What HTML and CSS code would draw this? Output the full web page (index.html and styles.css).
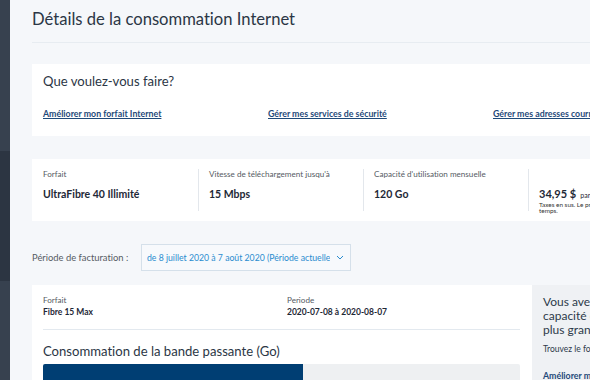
FILE: index.html
```
<!DOCTYPE html>
<html lang="fr">
<head>
<meta charset="utf-8">
<link rel="stylesheet" href="styles.css">
</head>
<body>
<div class="app">
  <aside class="sidebar">
    <div class="side-top"></div>
    <div class="side-mid"></div>
    <div class="side-bot"></div>
  </aside>
  <main class="main">
    <h1 class="title">Détails de la consommation Internet</h1>
    <div class="sep"></div>

    <section class="card actions">
      <h2 class="card-title">Que voulez-vous faire?</h2>
      <div class="links">
        <a class="link" href="#">Améliorer mon forfait Internet</a>
        <a class="link" href="#">Gérer mes services de sécurité</a>
        <a class="link" href="#">Gérer mes adresses courriel</a>
      </div>
    </section>

    <section class="card plan">
      <div class="col">
        <div class="label">Forfait</div>
        <div class="value">UltraFibre 40 Illimité</div>
      </div>
      <div class="col">
        <div class="label">Vitesse de téléchargement jusqu'à</div>
        <div class="value">15 Mbps</div>
      </div>
      <div class="col">
        <div class="label">Capacité d'utilisation mensuelle</div>
        <div class="value">120 Go</div>
      </div>
      <div class="col price">
        <div class="price-line"><span class="amount">34,95 $</span> <span class="per">par mois</span></div>
        <div class="note">Taxes en sus. Le prix peut changer en tout temps.</div>
      </div>
    </section>

    <div class="period">
      <span class="period-label">Période de facturation :</span>
      <div class="select">
        <span class="select-text">de 8 juillet 2020 à 7 août 2020 (Période actuelle)</span>
        <svg class="chev" width="8" height="5" viewBox="0 0 8 5"><path d="M1 1 L4 4 L7 1" fill="none" stroke="#2a8ccf" stroke-width="1"/></svg>
      </div>
    </div>

    <div class="usage">
      <section class="card usage-main">
        <div class="info-row">
          <div class="info">
            <div class="label">Forfait</div>
            <div class="info-value">Fibre 15 Max</div>
          </div>
          <div class="info">
            <div class="label">Periode</div>
            <div class="info-value">2020-07-08 à 2020-08-07</div>
          </div>
        </div>
        <div class="inner-sep"></div>
        <h2 class="card-title bw">Consommation de la bande passante (Go)</h2>
        <div class="bar"><div class="bar-fill" style="width:54.5%"></div></div>
      </section>
      <aside class="promo">
        <p class="promo-title"><span class="pl">Vous avez besoin d'une</span><span class="pl">capacité d'utilisation</span><span class="pl">plus grande?</span></p>
        <p class="promo-text">Trouvez le forfait qui vous convient.</p>
        <a class="link" href="#">Améliorer mon forfait</a>
      </aside>
    </div>
  </main>
</div>
</body>
</html>
```
FILE: styles.css
```
html, body {
  margin: 0;
  padding: 0;
}
body {
  width: 590px;
  height: 380px;
  overflow: hidden;
  background: #f5f7fa;
  font-family: Lato, "Open Sans", sans-serif;
  font-variant-ligatures: none;
  color: #2d3a4a;
}
.app {
  display: flex;
  width: 700px;
  height: 380px;
}
.sidebar {
  width: 10px;
  flex: none;
  display: flex;
  flex-direction: column;
}
.side-top { height: 151px; background: #37414f; }
.side-mid { height: 130px; background: #2c3542; }
.side-bot { flex: 1; background: #37414f; }
.main {
  flex: 1;
  padding-left: 22px;
}
.title {
  margin: 0;
  padding-top: 7px;
  height: 27px;
  font-size: 16.6px;
  font-weight: 400;
  line-height: 24px;
  color: #2b3645;
}
.sep {
  height: 1px;
  background: #e7ecf1;
  margin-top: 8px;
}
.card {
  background: #fff;
}
.actions {
  margin-top: 21px;
  height: 72px;
  padding: 0 11px;
  box-sizing: border-box;
}
.card-title {
  margin: 0;
  font-weight: 400;
  font-size: 13.1px;
  line-height: 18px;
  color: #2b3645;
}
.actions .card-title {
  padding-top: 8px;
}
.links {
  display: grid;
  grid-template-columns: 225px 225px 225px;
  margin-top: 18px;
}
.link {
  font-size: 8.8px;
  line-height: 12px;
  color: #1f4a7a;
  text-decoration: underline;
  font-weight: 700;
  white-space: nowrap;
}
.plan {
  margin-top: 23px;
  height: 62px;
  display: flex;
  align-items: stretch;
  padding: 10px 0;
  box-sizing: border-box;
}
.col {
  width: 165px;
  flex: none;
  box-sizing: border-box;
  padding-left: 10px;
  border-left: 1px solid #e3e7ec;
}
.col:first-child {
  border-left: none;
  padding-left: 11px;
  width: 166px;
}
.label {
  font-size: 8.1px;
  line-height: 10px;
  color: #555b63;
  white-space: nowrap;
}
.value {
  margin-top: 8px;
  font-size: 10.5px;
  font-weight: 700;
  line-height: 14px;
  color: #1e2836;
  white-space: nowrap;
}
.price-line {
  margin-top: 16px;
  line-height: 14px;
  white-space: nowrap;
}
.amount {
  font-size: 11px;
  font-weight: 700;
  color: #1e2836;
}
.per {
  font-size: 7px;
  color: #1e2836;
}
.note {
  font-size: 6.4px;
  line-height: 6px;
  color: #333;
  margin-top: 0;
  width: 130px;
}
.period {
  display: flex;
  align-items: center;
  margin-top: 23px;
  height: 27px;
}
.period-label {
  font-size: 9.4px;
  color: #555b63;
  width: 109px;
  flex: none;
}
.select {
  width: 210px;
  height: 27px;
  box-sizing: border-box;
  border: 1px solid #d5e0ea;
  background: #f7f9fc;
  display: flex;
  align-items: center;
  padding: 0 6px 0 5px;
  gap: 6px;
}
.select-text {
  flex: 1;
  overflow: hidden;
  white-space: nowrap;
  font-size: 8.7px;
  color: #2a8ccf;
}
.chev { flex: none; }
.usage {
  display: flex;
  margin-top: 14px;
  height: 120px;
}
.usage-main {
  width: 500px;
  flex: none;
  box-sizing: border-box;
  padding: 10px 12px 0 11px;
}
.info-row {
  display: flex;
}
.info {
  width: 244px;
  flex: none;
}
.info-value {
  margin-top: 1px;
  font-size: 8.5px;
  font-weight: 700;
  line-height: 12px;
  color: #1e2836;
  white-space: nowrap;
}
.inner-sep {
  height: 1px;
  background: #e3e9ef;
  margin-top: 11px;
}
.bw {
  margin-top: 12px;
}
.bar {
  margin-top: 4px;
  height: 20px;
  background: #eef0f2;
  border-radius: 2px;
  overflow: hidden;
}
.bar-fill {
  height: 100%;
  background: #003e73;
}
.promo {
  flex: 1;
  background: #eff1f4;
  padding: 10px 11px;
}
.promo-title {
  margin: 0;
  font-size: 12px;
  line-height: 14px;
  color: #2d3a4a;
}
.pl {
  display: block;
  white-space: nowrap;
}
.promo-text {
  margin: 7px 0 9px;
  font-size: 8.5px;
  color: #2d3a4a;
  white-space: nowrap;
}
```
